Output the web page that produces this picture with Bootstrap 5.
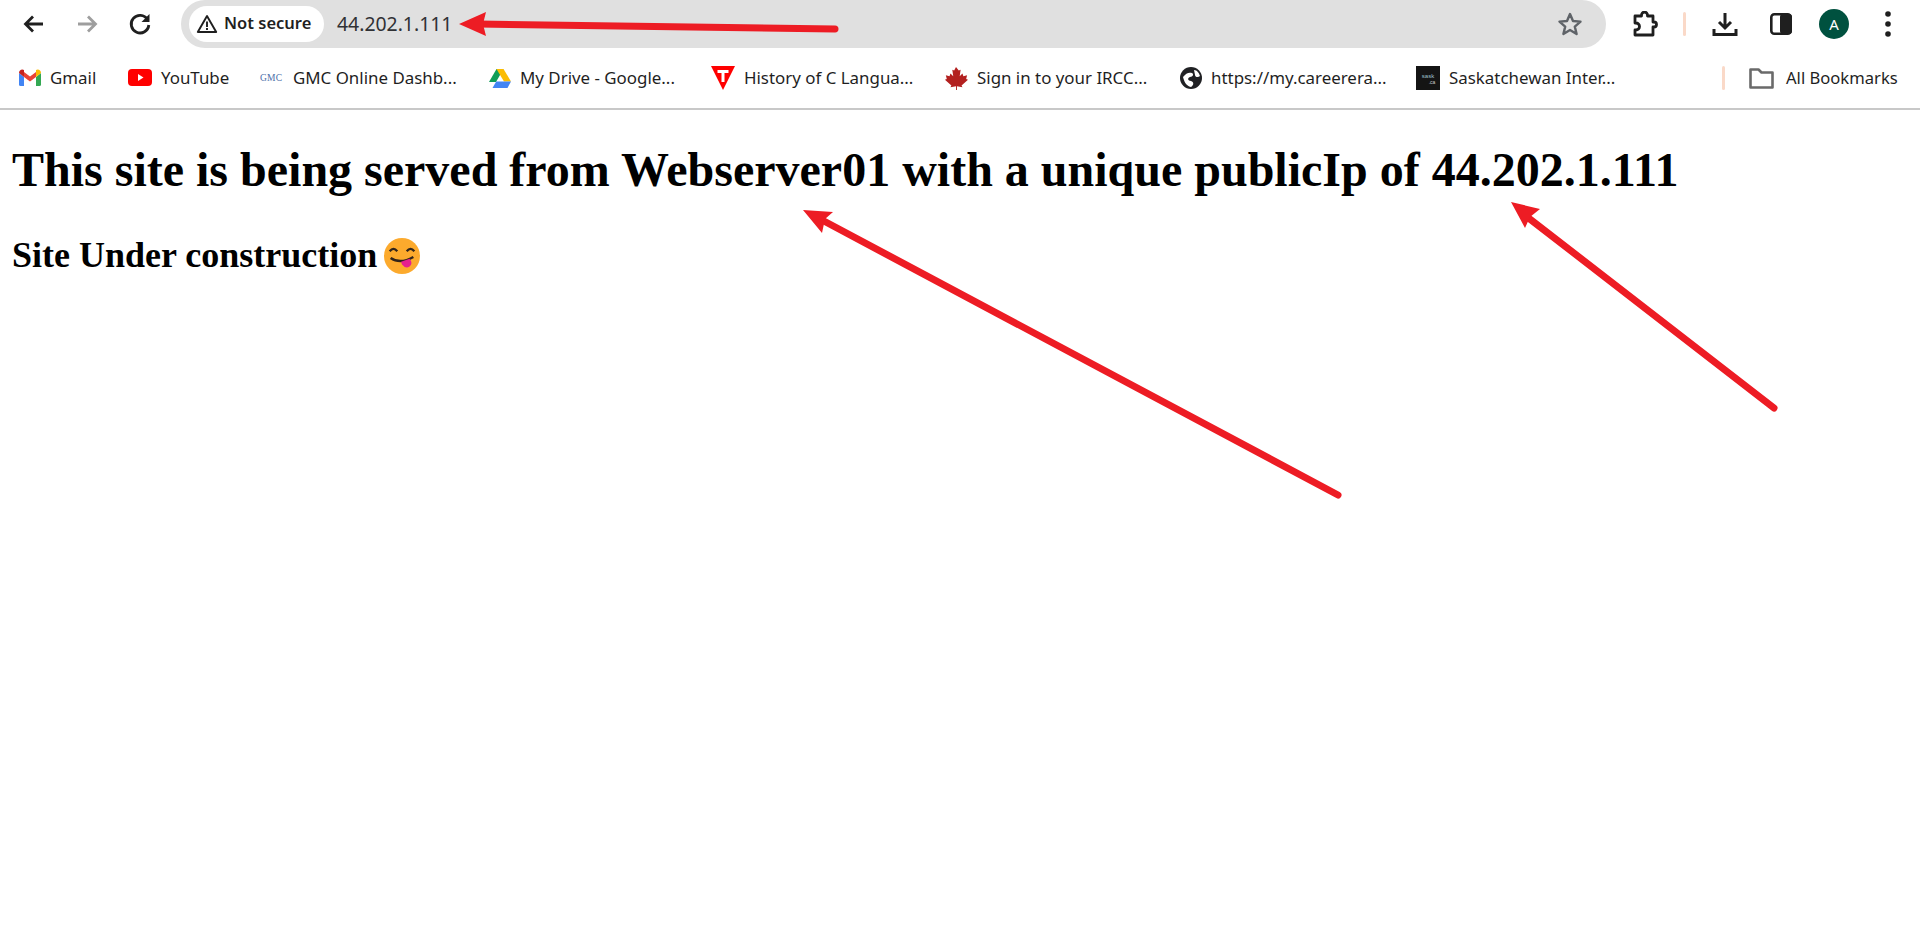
<!doctype html>
<html lang="en">
<head>
<meta charset="utf-8">
<title>Site</title>
<link href="https://cdn.jsdelivr.net/npm/bootstrap@5.3.0/dist/css/bootstrap.min.css" rel="stylesheet">
<style>
html,body{height:100%}
body{background:#fff;color:#000;position:relative;overflow:hidden;font-family:"Liberation Serif","Times New Roman",serif;}
.chrome-ui{font-family:"Noto Sans","Open Sans",sans-serif;color:#1f1f1f;font-size:16px}
.tool-row{height:48px;padding-left:18px}
.tool-ic{width:32px;height:32px;flex:none}
.nav-ics{gap:21px}
.omni{background:#e0e0e0;height:48px;width:1425px;margin-left:25px;border-radius:24px;padding:0 23px 0 8px;margin-top:-1px;flex:none}
.sec-chip{background:#fff;height:36px;width:135px;border-radius:18px;font-size:16.5px;font-weight:600;padding-left:7px;gap:6px;color:#1f1f1f;white-space:nowrap}
.addr{font-size:19.4px;margin-left:13px;color:#303134}
.right-ics{padding-left:26px}
.sepbar{width:3px;height:24px;background:#fad9c8;border-radius:2px;flex:none}
.avatar{width:30px;height:30px;border-radius:50%;background:#00513f;color:#fff;font-size:15px;line-height:30px;text-align:center;flex:none}
.mark-row{padding-left:19px;border-bottom:2px solid #c8c8c8;height:62px;font-size:16.9px;color:#1f1f1f}
.mk{display:flex;align-items:center;gap:9px;white-space:nowrap;flex:none}
.mk svg{flex:none}
.gmc-tag{font-family:"Liberation Serif",serif;font-size:9.5px;color:#4a6ea9;width:24px;letter-spacing:.2px}
.site-h1{font-family:"Liberation Serif","Times New Roman",serif;font-size:48px;font-weight:700;line-height:55px;margin:32px 0 0;padding:0;color:#000}
.site-h2{font-family:"Liberation Serif","Times New Roman",serif;font-size:36px;font-weight:700;line-height:41px;margin:38px 0 0;color:#000}
.site-main{padding:0 12px}
.emoji{display:inline-block;vertical-align:-7px;margin-left:-2px}
.overlay{position:absolute;left:0;top:0;width:1920px;height:936px;pointer-events:none}
.gap-l25{margin-left:25px}.gap-l26{margin-left:26px}.gap-l32{margin-left:32px}.gap-l27{margin-left:27px}.gap-l35{margin-left:35px}
.w109{width:109px}.w132{width:132px}.w229{width:229px}.w222{width:222px}.w233{width:233px}.w236{width:236px}
.sep-abs{left:1722px;top:18px}
.all-abs{left:1749px;top:18px;gap:12px;font-size:16.6px}
</style>
</head>
<body>
<div class="chrome-ui">
  <div class="tool-row d-flex align-items-center">
    <div class="d-flex align-items-center nav-ics">
      <svg class="tool-ic" viewBox="0 0 32 32" fill="none" stroke="#1f1f1f" stroke-width="2.800"><path d="M25 16H8M15 8.500 7.500 16l7.500 7.500"/></svg>
      <svg class="tool-ic" viewBox="0 0 32 32" fill="none" stroke="#9e9e9e" stroke-width="2.800"><path d="M7 16h17M17 8.500l7.500 7.500-7.500 7.500"/></svg>
      <svg class="tool-ic" viewBox="0 0 32 32" fill="none" stroke="#1f1f1f" stroke-width="2.800"><path d="M23.500 11.500A8.800 8.800 0 1 0 24.800 17"/><path d="M25.500 6v8h-8z" fill="#1f1f1f" stroke="none"/></svg>
    </div>
    <div class="omni d-flex align-items-center">
      <div class="sec-chip d-flex align-items-center">
        <svg width="22" height="20" viewBox="0 0 22 20" fill="none" stroke="#1f1f1f" stroke-width="1.900"><path d="M11 2 1.800 18h18.400z" stroke-linejoin="round"/><path d="M11 7.500v5.500M11 14v2"/></svg>
        <span>Not secure</span>
      </div>
      <span class="addr">44.202.1.111</span>
      <svg class="ms-auto" width="26" height="26" viewBox="0 0 26 26" fill="none" stroke="#5f6368" stroke-width="2.400"><path d="m13 3 3 7 7.500.6-5.700 5 1.800 7.400-6.600-4-6.600 4 1.800-7.400-5.700-5L10 10z" stroke-linejoin="round"/></svg>
    </div>
    <div class="right-ics d-flex align-items-center flex-grow-1">
      <svg width="26" height="26" viewBox="0 0 26 26" fill="none" stroke="#1f1f1f" stroke-width="2.800" stroke-linejoin="round"><path d="M3 5h6.500V4a3 3 0 0 1 6 0v1H21v6h1a2.500 2.500 0 0 1 0 5h-1v8H3v-5h1a3.500 3.500 0 0 0 0-7H3z"/></svg>
      <div class="sepbar gap-l25"></div>
      <svg class="gap-l26" width="26" height="26" viewBox="0 0 26 26" fill="none" stroke="#1f1f1f" stroke-width="3"><path d="M13 2v14M7 11l6 6 6-6"/><path d="M2 18v5.500h22V18"/></svg>
      <svg class="gap-l32" width="22" height="22" viewBox="0 0 22 22"><rect x="1.300" y="1.300" width="19.400" height="19.400" rx="3" fill="#fff" stroke="#1f1f1f" stroke-width="2.600"/><rect x="10" y="1" width="12" height="20" rx="3" fill="#1f1f1f"/></svg>
      <div class="avatar gap-l27">A</div>
      <svg class="gap-l35" width="8" height="26" viewBox="0 0 8 26" fill="#1f1f1f"><circle cx="4" cy="3" r="2.800"/><circle cx="4" cy="13" r="2.800"/><circle cx="4" cy="23" r="2.800"/></svg>
    </div>
  </div>
  <div class="mark-row d-flex align-items-center position-relative">
    <div class="mk w109"><svg width="22" height="17" viewBox="0 0 22 17"><path d="M0 4v11.500A1.500 1.500 0 0 0 1.500 17H5V8z" fill="#4285f4"/><path d="M22 4v11.500a1.500 1.500 0 0 1-1.500 1.500H17V8z" fill="#34a853"/><path d="M5 8V3l6 4.500L17 3v5l-6 4.500z" fill="#ea4335"/><path d="M0 4c0-3 3-4.500 5-3v7z" fill="#c5221f"/><path d="M22 4c0-3-3-4.500-5-3v7z" fill="#fbbc04"/></svg><span>Gmail</span></div>
    <div class="mk w132"><svg width="24" height="17" viewBox="0 0 24 17"><rect width="24" height="17" rx="4" fill="#f00"/><path d="m10 5 5.500 3.500L10 12z" fill="#fff"/></svg><span>YouTube</span></div>
    <div class="mk w229"><span class="gmc-tag">GMC</span><span>GMC Online Dashb...</span></div>
    <div class="mk w222"><svg width="22" height="20" viewBox="0 0 22 20"><path d="M7.500 1h7L7 14H0z" fill="#0f9d58"/><path d="M7.500 1h7L22 13.500h-7z" fill="#fbbc04"/><path d="M3.500 20l3.700-6.500H22L18.500 20z" fill="#4285f4"/></svg><span>My Drive - Google...</span></div>
    <div class="mk w233"><svg width="24" height="24" viewBox="0 0 24 24"><path d="M0 0h24L12 24z" fill="#f00"/><path d="M6.500 4h11v3h-4v9h-3V7h-4z" fill="#fff"/></svg><span>History of C Langua...</span></div>
    <div class="mk w236"><svg width="24" height="24" viewBox="0 0 26 24"><path d="M13 0l3 4 2-1-1 7 3-3 1 3 4-1-1 4 2 1-7 6 1 2-6-1v4h-1v-4l-6 1 1-2-7-6 2-1-1-4 4 1 1-3 3 3-1-7 2 1z" fill="#b3201f"/></svg><span>Sign in to your IRCC...</span></div>
    <div class="mk w236"><svg width="22" height="22" viewBox="0 0 22 22"><circle cx="11" cy="11" r="11" fill="#202124"/><path d="M3 10c3-4 6-5 9-4 2 1 1 4-2 4-3 1-2 4 1 4 3 1 3 4 0 6-5-1-7-6-8-10zM14 3c3 0 5 3 6 6-2 2-5 1-5-1z" fill="#fff"/></svg><span>https://my.careerera...</span></div>
    <div class="mk"><svg width="24" height="24" viewBox="0 0 24 24"><rect width="24" height="24" fill="#141414"/><text x="12" y="12" font-size="6" fill="#9fc0cc" text-anchor="middle" font-family="Liberation Sans">sask</text><text x="16" y="18" font-size="5" fill="#ccc" text-anchor="middle" font-family="Liberation Sans">.ca</text></svg><span>Saskatchewan Inter...</span></div>
    <div class="sepbar position-absolute sep-abs"></div>
    <div class="mk position-absolute all-abs"><svg width="25" height="22" viewBox="0 0 25 22" fill="none" stroke="#6a6a6a" stroke-width="2.600" stroke-linejoin="round"><path d="M1.500 2.500h8l3 3h11v15h-22z"/></svg><span>All Bookmarks</span></div>
  </div>
</div>
<main class="site-main">
  <h1 class="site-h1">This site is being served from Webserver01 with a unique publicIp of 44.202.1.111</h1>
  <h2 class="site-h2">Site Under construction <svg class="emoji" width="36" height="36" viewBox="0 0 38 38"><circle cx="19" cy="19" r="19" fill="#fcaa2d"/><path d="M6 14q4-5 8 0M24 14q4-5 8 0" fill="none" stroke="#30241a" stroke-width="2.400"/><path d="M7 21q10 7 24-1" fill="none" stroke="#30241a" stroke-width="2.600"/><path d="M18 25l9-3q4 5 0 8t-8-2z" fill="#e5208f"/></svg></h2>
</main>
<svg class="overlay" viewBox="0 0 1920 936">
  <g fill="#ed1c24" stroke-linecap="round">
    <path d="M835 29 478 24" stroke="#ed1c24" stroke-width="7" fill="none"/>
    <path d="M459 24l27-12-3 12 3 12z"/>
    <path d="M1338 495 822 220" stroke="#ed1c24" stroke-width="7" fill="none"/>
    <path d="M803 210l30 2-8 7-3 14z"/>
    <path d="M1774 408 1526 216" stroke="#ed1c24" stroke-width="7" fill="none"/>
    <path d="M1511 202l29 7-10 8-5 11z"/>
  </g>
</svg>
<script src="https://cdn.jsdelivr.net/npm/bootstrap@5.3.0/dist/js/bootstrap.bundle.min.js"></script>
</body>
</html>
